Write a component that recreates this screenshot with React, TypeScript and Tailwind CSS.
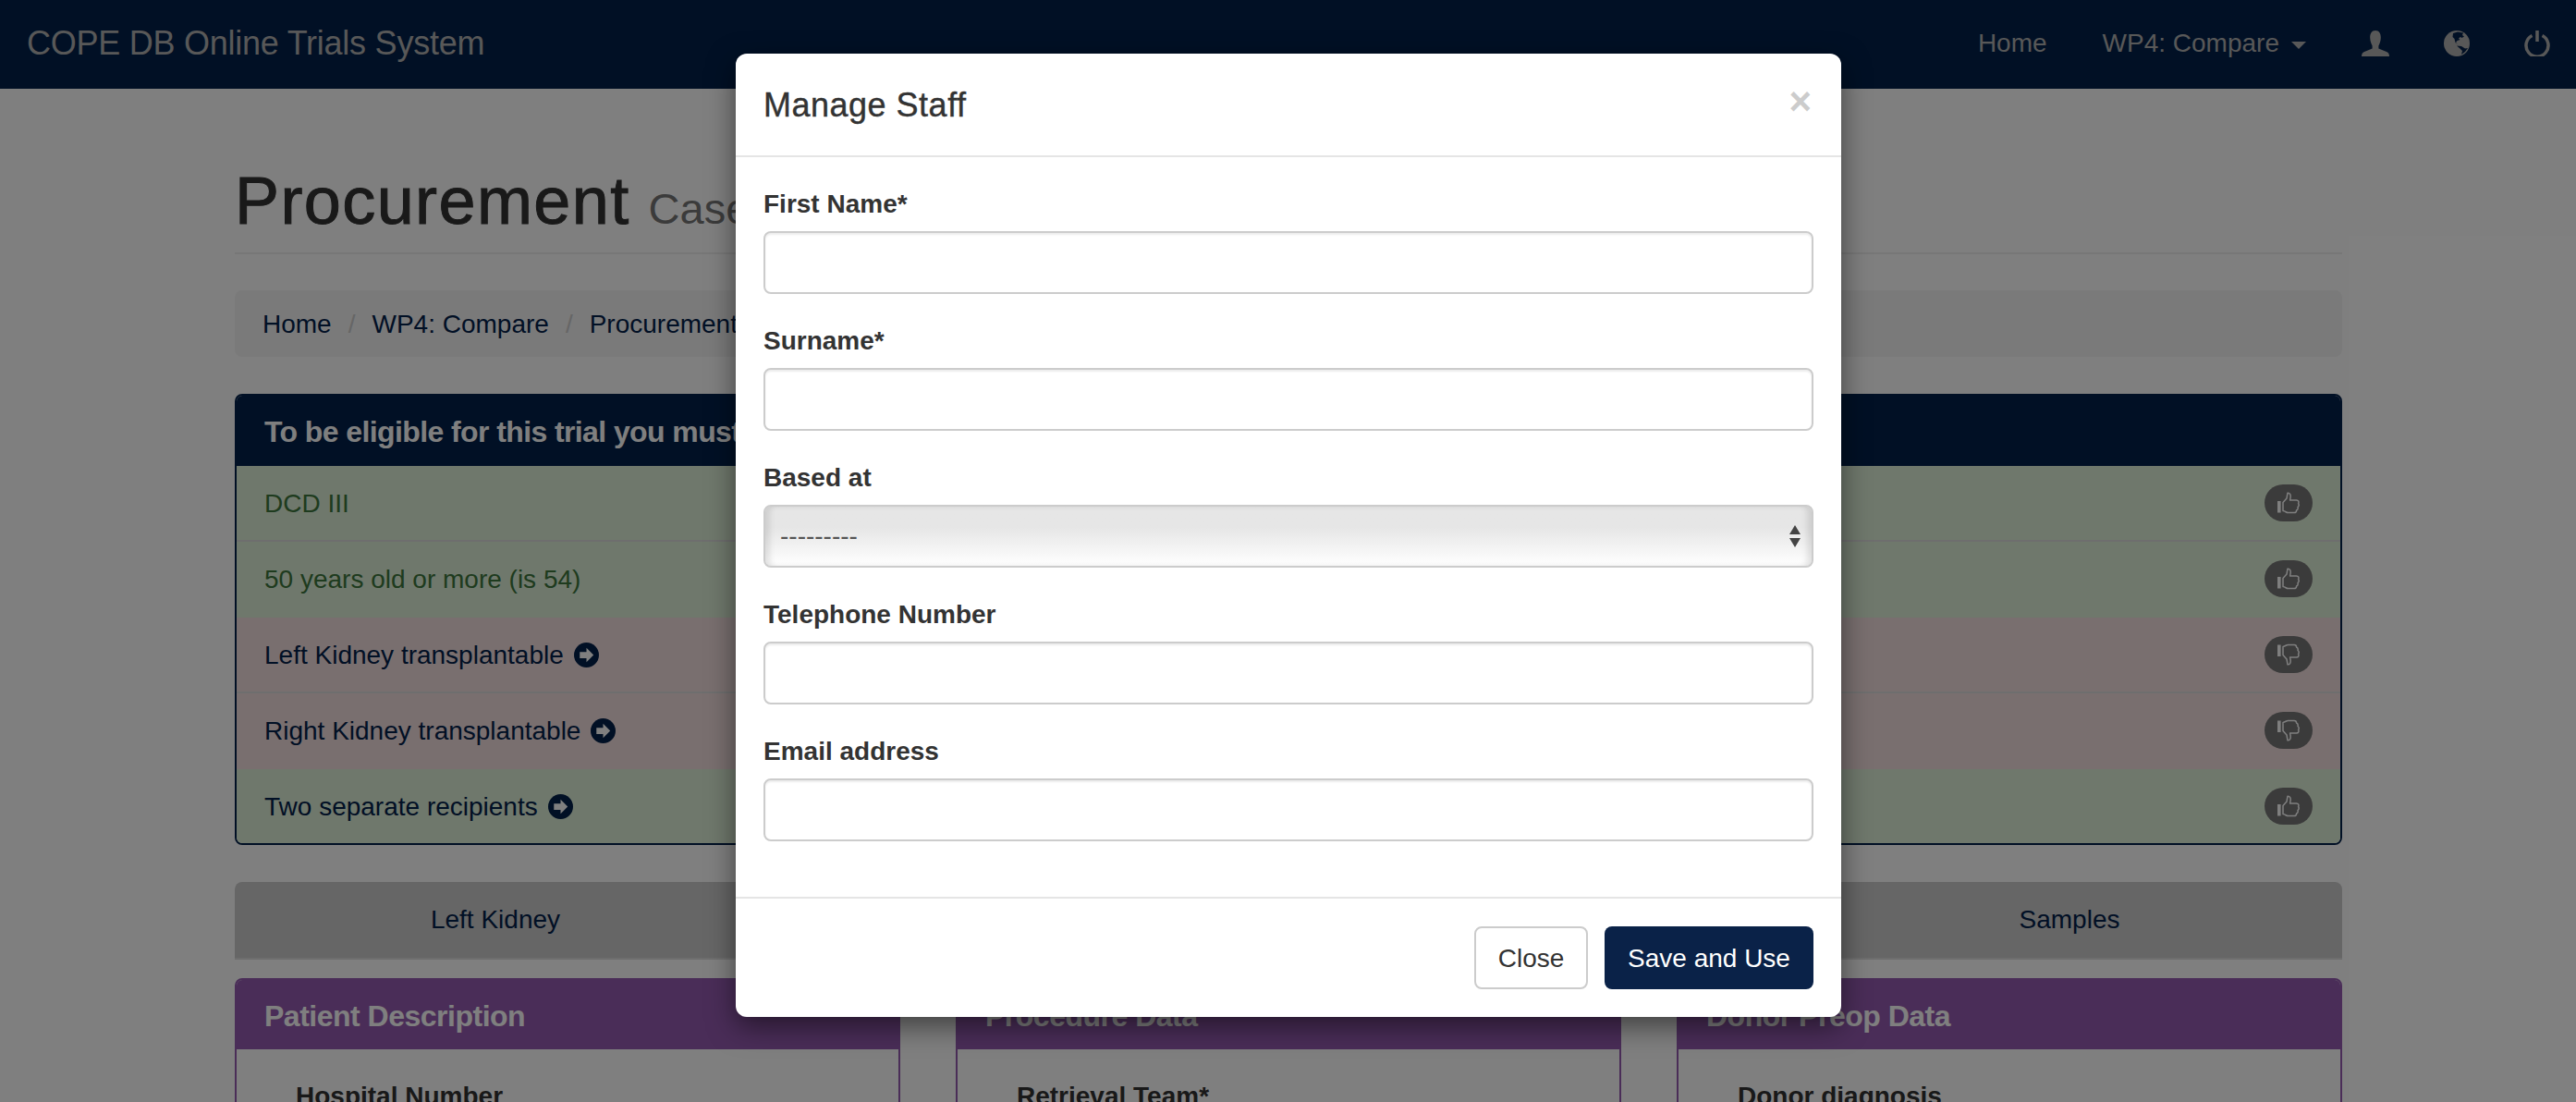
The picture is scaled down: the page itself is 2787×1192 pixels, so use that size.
const rows = [
  { text: "DCD III", bg: "bg-[#dff0d8]", line: "border-[#ddd]", color: "text-[#3c763d]", up: true },
  { text: "50 years old or more (is 54)", bg: "bg-[#dff0d8]", line: "border-[#dff0d8]", color: "text-[#3c763d]", up: true },
  { text: "Left Kidney transplantable", bg: "bg-[#f2dede]", line: "border-[#ddd]", color: "text-[#03214a]", arrow: true },
  { text: "Right Kidney transplantable", bg: "bg-[#f2dede]", line: "border-[#f2dede]", color: "text-[#03214a]", arrow: true },
  { text: "Two separate recipients", bg: "bg-[#dff0d8]", line: "border-[#dff0d8]", color: "text-[#03214a]", arrow: true, up: true },
];

const panels = [
  { title: "Patient Description", label: "Hospital Number" },
  { title: "Procedure Data", label: "Retrieval Team*" },
  { title: "Donor Preop Data", label: "Donor diagnosis" },
];

const fields = ["First Name*", "Surname*", "Based at", "Telephone Number", "Email address"];

function Thumb({ down }: { down?: boolean }) {
  return (
    <svg viewBox="0 0 24 24" className={down ? "size-6 -scale-y-100" : "size-6"}>
      <rect x="0" y="10" width="3.6" height="12.5" fill="#fff" />
      <path
        d="M6 11.5 10 7 11 1.2C13.2 1 14.7 3 14 6.5L13.6 9H20.5C22.8 9 23.4 11 22.6 12.5 23.5 14 23.2 15.5 22 16.5 22.4 18 21.8 19.5 20.6 20 20.6 21.6 19.6 22.6 18 22.6H11.5C9.5 22.6 8.8 21 6 20.6Z"
        fill="none"
        stroke="#fff"
        strokeWidth="1.5"
        strokeLinejoin="round"
      />
    </svg>
  );
}

function CircleArrow() {
  return (
    <svg viewBox="0 0 28 28" className="size-[27px] shrink-0 -mt-[2px]">
      <circle cx="14" cy="14" r="14" fill="#03214a" />
      <path d="M14 6 22 14 14 22V17.5H6.5V10.5H14Z" fill="#fff" />
    </svg>
  );
}

function NavIcons() {
  return (
    <div className="flex items-center">
      <svg viewBox="0 0 30 28" className="w-[30px] h-[28px] ml-[60px]" fill="#b0b0b0">
        <path d="M15 0C19 0 21 3.5 20.8 8 20.7 11.5 19.5 14.5 18.4 16.5V19.5L27 23C29 23.8 30 25.2 30 28H0C0 25.2 1 23.8 3 23L11.6 19.5V16.5C10.5 14.5 9.3 11.5 9.2 8 9 3.5 11 0 15 0Z" />
      </svg>
      <svg viewBox="0 0 28 28" className="size-[28px] ml-[59px]">
        <circle cx="14" cy="14" r="14" fill="#b0b0b0" />
        <path d="M10 3 15 1.5 21 2.5 20 5 22 6.5 19.5 8 18 7 16 8.5 17.5 10 14.5 11 13 13 15.5 15.5 12.5 13 11.5 9 9.5 7Z" fill="#03214a" />
        <path d="M14 16.5 19 17 23 19.5 26 19 23 23 19 26 20 22 17.5 19.5Z" fill="#03214a" />
      </svg>
      <svg viewBox="0 0 28 28" className="size-[28px] ml-[59px]" fill="none" stroke="#b0b0b0" strokeWidth="3.5">
        <path d="M8.5 5.5A12 12 0 1 0 19.5 5.5" />
        <path d="M14 0V12" />
      </svg>
    </div>
  );
}

function StaffModal() {
  return (
    <div className="absolute left-[796px] top-[58px] w-[1196px] h-[1042px] bg-white rounded-xl shadow-[0_10px_30px_rgba(0,0,0,0.5)] text-[#333]">
      <div className="h-[112px] border-b-2 border-[#e5e5e5] px-[30px] pt-[30px] flex justify-between">
        <h4 className="text-[36px] leading-[51px] tracking-[0.5px] [-webkit-text-stroke:0.4px_#333]">Manage Staff</h4>
        <button className="text-[42px] leading-[24px] font-bold text-[#ccc] h-[24px] mt-[10px] mr-[2px]">×</button>
      </div>

      <div className="p-[30px] h-[800px]">
        {fields.map((field) => (
          <div key={field} className="mb-[30px]">
            <label className="block text-[28px] leading-[40px] font-bold mb-[10px] pt-[1px] h-[40px]">{field}</label>
            {field === "Based at" ? (
              <div className="relative">
                <select className="appearance-none block w-full h-[68px] border-2 border-[#ccc] rounded-lg px-[16px] text-[28px] text-[#555] bg-gradient-to-b from-[#e6e6e6] from-35% to-white shadow-[inset_7px_0_6px_-2px_rgba(0,0,0,0.1),inset_-7px_0_6px_-2px_rgba(0,0,0,0.1)]">
                  <option>---------</option>
                </select>
                <svg viewBox="0 0 12 24" className="absolute right-[14px] top-[22px] w-[12px] h-[24px]" fill="#444">
                  <path d="M6 0 12 10H0ZM0 14H12L6 24Z" />
                </svg>
              </div>
            ) : (
              <input className="block w-full h-[68px] border-2 border-[#ccc] rounded-lg shadow-[inset_0_2px_2px_rgba(0,0,0,0.075)]" />
            )}
          </div>
        ))}
      </div>

      <div className="border-t-2 border-[#e5e5e5] p-[30px] flex justify-end gap-[18px] text-[28px]">
        <button className="h-[68px] w-[123px] border-2 border-[#ccc] rounded-lg pt-[2px]">Close</button>
        <button className="h-[68px] w-[226px] rounded-lg bg-[#0a2248] text-white pt-[2px]">Save and Use</button>
      </div>
    </div>
  );
}

export default function App() {
  return (
    <div className="relative h-[1192px] overflow-hidden bg-white font-['Liberation_Sans',Arial,sans-serif] text-[28px] leading-[40px] text-[#333]">
      <nav className="h-[96px] bg-[#03214a] pl-[29px] pr-[28px] flex items-center justify-between text-[#b0b0b0]">
        <span className="text-[36px] tracking-[-0.25px] -mt-[2px]">COPE DB Online Trials System</span>
        <div className="flex items-center -mt-[2px]">
          <span className="mr-[60px] ml-[2px]">Home</span>
          <span>WP4: Compare</span>
          <span className="ml-[13px] mt-[4px] border-x-[8px] border-x-transparent border-t-[8px] border-t-[#b0b0b0]" />
          <NavIcons />
        </div>
      </nav>

      <main className="pl-[254px] pr-[253px]">
        <div className="mt-[82px] pb-[16px] border-b-2 border-[#eee]">
          <h1 className="text-[72px] leading-[79px] text-[#333]">
            <span className="tracking-[1.4px] [-webkit-text-stroke:1px_#333]">Procurement</span>{" "}
            <small className="text-[47px] leading-none text-[#777]">Case</small>
          </h1>
        </div>

        <div className="mt-[39px] h-[72px] rounded-lg bg-[#f5f5f5] px-[30px] pt-[17px] flex gap-[18px] text-[#03214a]">
          <span>Home</span>
          <span className="text-[#ccc]">/</span>
          <span>WP4: Compare</span>
          <span className="text-[#ccc]">/</span>
          <span>Procurement</span>
        </div>

        <section className="mt-[40px] border-2 border-[#03214a] rounded-lg overflow-hidden">
          <div className="h-[76px] bg-[#03214a] px-[30px] pt-[2px] flex items-center text-[32px] font-bold tracking-[-0.6px] text-white">
            To be eligible for this trial you must
          </div>
          {rows.map((row, i) => (
            <div
              key={row.text}
              className={`${row.bg} ${row.color} ${i < 4 ? `border-b-2 ${row.line}` : ""} h-[82px] last:h-[80px] px-[30px] flex items-start justify-between pt-[20px]`}
            >
              <span className="flex items-center gap-[11px] pt-[1px]">
                {row.text}
                {row.arrow && <CircleArrow />}
              </span>
              <span className="w-[52px] h-[40px] rounded-[20px] bg-[#777] flex items-center justify-center">
                <Thumb down={!row.up} />
              </span>
            </div>
          ))}
        </section>

        <div className="mt-[40px] h-[84px] flex text-center text-[#03214a]">
          <div className="w-[564px] bg-[#ccc] border-b-2 border-[#ddd] rounded-tl-lg pt-[21px]">Left Kidney</div>
          <div className="flex-1 bg-[#ccc] border-b-2 border-[#ddd]" />
          <div className="w-[590px] bg-[#ccc] border-b-2 border-[#ddd] rounded-tr-lg pt-[21px]">Samples</div>
        </div>

        <div className="mt-[20px] grid grid-cols-3 gap-[60px]">
          {panels.map((panel) => (
            <section key={panel.title} className="border-2 border-[#945bb0] rounded-lg h-[300px] overflow-hidden">
              <div className="h-[75px] bg-[#945bb0] px-[30px] pt-[2px] flex items-center text-[32px] font-bold tracking-[-0.5px] text-white">
                {panel.title}
              </div>
              <div className="px-[64px] pt-[31px] font-bold text-[#333]">{panel.label}</div>
            </section>
          ))}
        </div>
      </main>

      <div className="absolute inset-0 bg-black/50" />
      <StaffModal />
    </div>
  );
}
